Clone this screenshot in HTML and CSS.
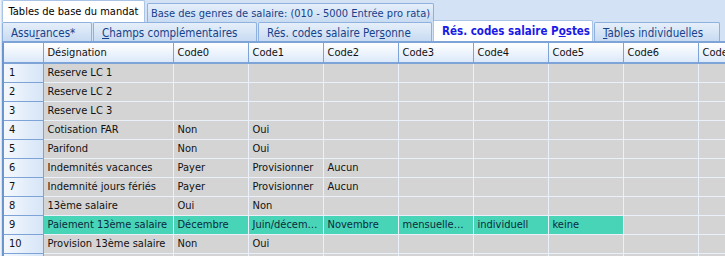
FILE: index.html
```html
<!DOCTYPE html>
<html lang="fr">
<head>
  <meta charset="UTF-8" />
  <title>Rés. codes salaire Postes</title>
  <link rel="stylesheet" href="styles.css">
</head>
<body>
  <div class="window">
    <div class="tabs top">
      <div class="tab active w-mandat">Tables de base du mandat</div>
      <div class="tab w-genres">Base des genres de salaire: (010 - 5000 Entrée pro rata)</div>
    </div>
    <div class="tabs sub">
      <div class="tab w-assur">Assu<u>r</u>ances*</div>
      <div class="tab w-champs"><u>C</u>hamps complémentaires</div>
      <div class="tab w-pers">Rés. codes salaire Per<u>s</u>onne</div>
      <div class="tab active w-postes">Rés. codes salaire P<u>o</u>stes</div>
      <div class="tab w-indiv"><u>T</u>ables individuelles</div>
    </div>
    <div class="grid-wrap">
      <table class="grid">
        <colgroup>
          <col class="c-num"><col class="c-des">
          <col class="c-code"><col class="c-code"><col class="c-code"><col class="c-code">
          <col class="c-code"><col class="c-code"><col class="c-code"><col class="c-code">
        </colgroup>
        <thead>
          <tr>
            <th></th><th>Désignation</th><th>Code0</th><th>Code1</th><th>Code2</th>
            <th>Code3</th><th>Code4</th><th>Code5</th><th>Code6</th><th>Code7</th>
          </tr>
        </thead>
        <tbody>
          <tr><th>1</th><td>Reserve LC 1</td><td></td><td></td><td></td><td></td><td></td><td></td><td></td><td></td></tr>
          <tr><th>2</th><td>Reserve LC 2</td><td></td><td></td><td></td><td></td><td></td><td></td><td></td><td></td></tr>
          <tr><th>3</th><td>Reserve LC 3</td><td></td><td></td><td></td><td></td><td></td><td></td><td></td><td></td></tr>
          <tr><th>4</th><td>Cotisation FAR</td><td>Non</td><td>Oui</td><td></td><td></td><td></td><td></td><td></td><td></td></tr>
          <tr><th>5</th><td>Parifond</td><td>Non</td><td>Oui</td><td></td><td></td><td></td><td></td><td></td><td></td></tr>
          <tr><th>6</th><td>Indemnités vacances</td><td>Payer</td><td>Provisionner</td><td>Aucun</td><td></td><td></td><td></td><td></td><td></td></tr>
          <tr><th>7</th><td>Indemnité jours fériés</td><td>Payer</td><td>Provisionner</td><td>Aucun</td><td></td><td></td><td></td><td></td><td></td></tr>
          <tr><th>8</th><td>13ème salaire</td><td>Oui</td><td>Non</td><td></td><td></td><td></td><td></td><td></td><td></td></tr>
          <tr class="selected"><th>9</th><td>Paiement 13ème salaire</td><td>Décembre</td><td>Juin/décembre</td><td>Novembre</td><td>mensuellement</td><td>individuell</td><td>keine</td><td class="plain"></td><td class="plain"></td></tr>
          <tr><th>10</th><td>Provision 13ème salaire</td><td>Non</td><td>Oui</td><td></td><td></td><td></td><td></td><td></td><td></td></tr>
          <tr><th></th><td></td><td></td><td></td><td></td><td></td><td></td><td></td><td></td><td></td></tr>
        </tbody>
      </table>
    </div>
  </div>
</body>
</html>
```

FILE: styles.css
```css
* {
  box-sizing: border-box;
}

body {
  margin: 0;
  width: 725px;
  height: 256px;
  overflow: hidden;
  background: #d3e2f5;
  font-family: 'DejaVu Sans Condensed', 'DejaVu Sans', sans-serif;
  font-size: 11px;
  color: #111;
}

.window {
  padding-left: 1px;
  border-left: 1px solid #eef3fa;
}

.tabs {
  display: flex;
  align-items: flex-end;
}

.tabs.top {
  height: 22px;
}

.tabs.sub {
  height: 21px;
  font-size: 11.5px;
  border-bottom: 2px solid #7ea3d6;
}

.tab {
  height: 19px;
  padding: 3px 8px 0;
  margin-right: 1px;
  white-space: nowrap;
  color: #15428b;
  border: 1px solid #8eb1df;
  border-bottom: none;
  border-radius: 2px 2px 0 0;
  background: linear-gradient(#e6effa, #c8dbf2);
}

.tabs.top .tab {
  padding-left: 0;
  padding-right: 0;
  text-align: center;
}

.tabs.top .tab.active {
  height: 22px;
  padding-top: 4px;
  color: #000;
  background: #fff;
  border-color: #a9c4e6;
}

.tabs.sub .tab.active {
  height: 21px;
  padding-top: 3px;
  font-weight: bold;
  color: #1a1ae6;
  background: #fff;
  border-color: #a9c4e6;
}

.tab u {
  text-underline-offset: 1px;
}

.w-mandat { width: 143px; }
.w-genres { width: 287px; margin-left: 1px; }
.w-assur { width: 90px; }
.w-champs { width: 164px; }
.w-pers { width: 174px; }
.w-postes { width: 160px; }
.w-indiv { width: 126px; }

.grid-wrap {
  border-left: 2px solid #6a95cf;
}

.grid {
  border-collapse: collapse;
  table-layout: fixed;
  width: 769px;
}

.c-num { width: 39px; }
.c-des { width: 130px; }
.c-code { width: 75px; }

.grid th,
.grid td {
  height: 19px;
  padding: 0 4px;
  text-align: left;
  font-weight: normal;
  white-space: nowrap;
  overflow: hidden;
  text-overflow: ellipsis;
}

.grid thead th {
  height: 20px;
  border-right: 1px solid #7ea3d6;
  border-bottom: 2px solid #7ea3d6;
  background: linear-gradient(#ffffff, #dce9f9);
}

.grid tbody th {
  padding-left: 5px;
  border-right: 1px solid #7ea3d6;
  border-bottom: 1px solid #7ea3d6;
  background: linear-gradient(90deg, #f4f8fd, #d6e5f7);
}

.grid td {
  background: #d4d4d4;
  border-right: 1px solid #eaf1fa;
  border-bottom: 1px solid #eaf1fa;
}

.grid tr.selected td {
  background: #48d4b6;
  color: #0c2a40;
}

.grid tr.selected td.plain {
  background: #d4d4d4;
}
```
